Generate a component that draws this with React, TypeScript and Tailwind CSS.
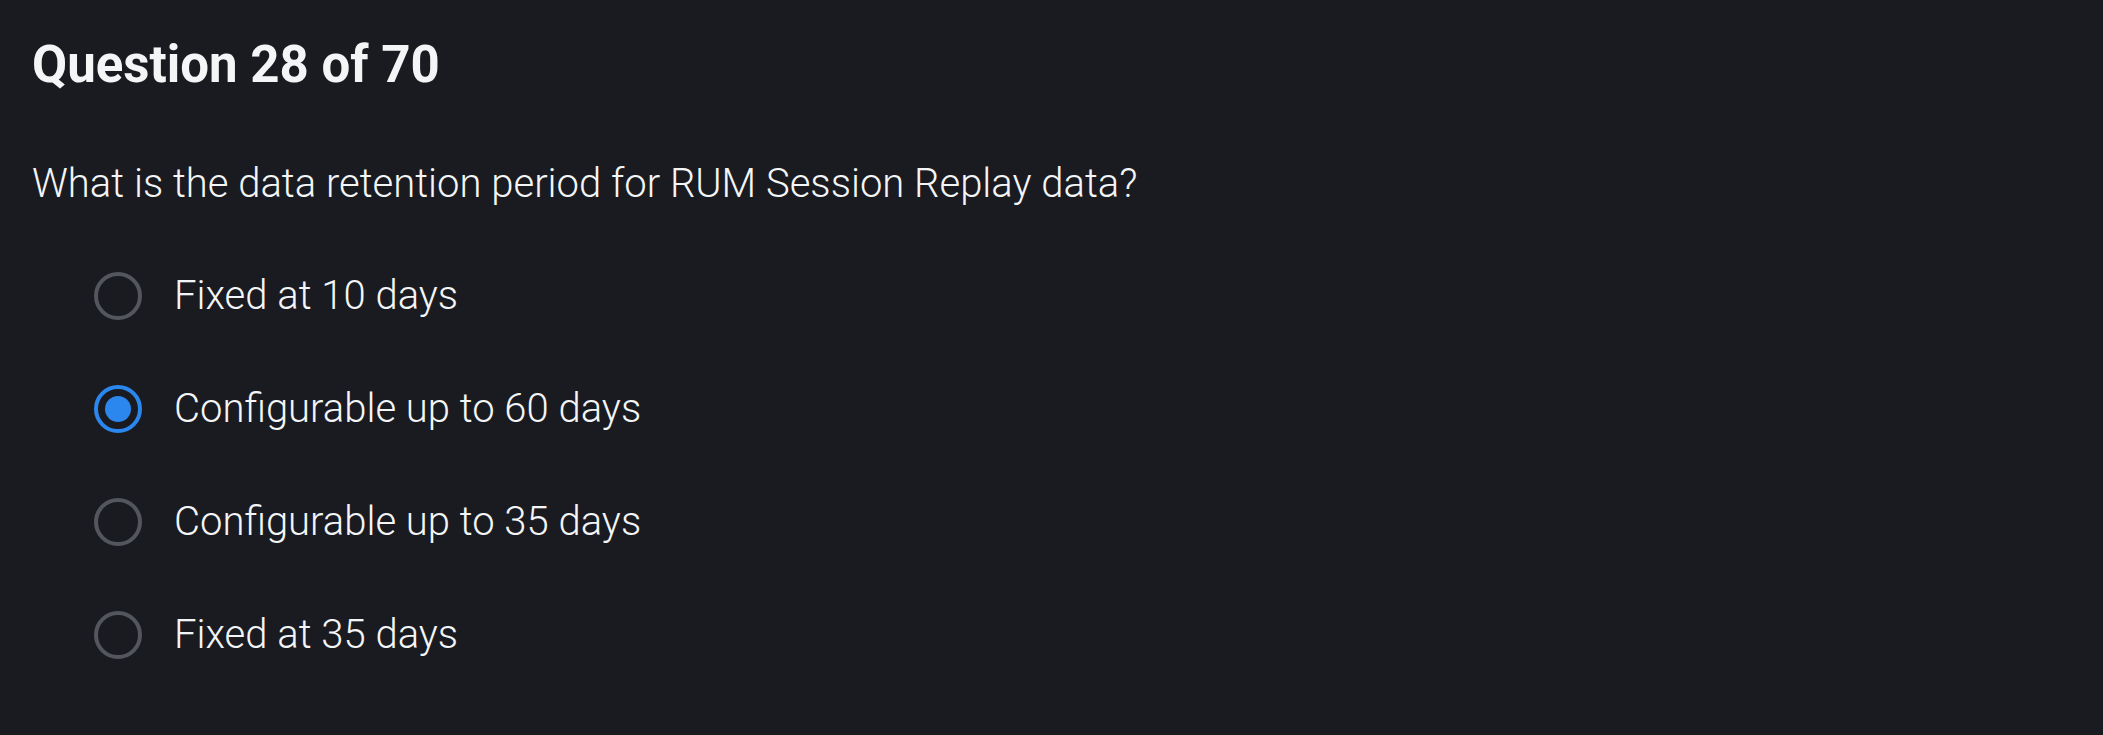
import React from "react";

const options = [
  { label: "Fixed at 10 days", selected: false },
  { label: "Configurable up to 60 days", selected: true },
  { label: "Configurable up to 35 days", selected: false },
  { label: "Fixed at 35 days", selected: false },
];

function Radio({ selected }: { selected: boolean }) {
  return (
    <span
      className={
        selected
          ? "flex h-[48px] w-[48px] shrink-0 items-center justify-center rounded-full border-4 border-[#2b87ee]"
          : "flex h-[48px] w-[48px] shrink-0 items-center justify-center rounded-full border-4 border-[#53565c]"
      }
    >
      {selected && <span className="h-[26px] w-[26px] rounded-full bg-[#2b87ee]" />}
    </span>
  );
}

export default function App() {
  return (
    <div className="min-h-[735px] w-full bg-[#191b20] pl-8 pt-[35px] text-[#f4f5f7] font-['Roboto',sans-serif]">
      <h1 className="text-[51px] font-bold leading-[60px]">Question 28 of 70</h1>
      <p className="mt-[65px] text-[40px] font-light leading-[48px]">
        What is the data retention period for RUM Session Replay data?
      </p>
      <div className="mt-[64px] flex flex-col gap-[65px] pl-[62px]">
        {options.map((o) => (
          <label key={o.label} className="flex h-[48px] items-center gap-8">
            <Radio selected={o.selected} />
            <span className="text-[40px] font-light leading-[48px]">{o.label}</span>
          </label>
        ))}
      </div>
    </div>
  );
}
